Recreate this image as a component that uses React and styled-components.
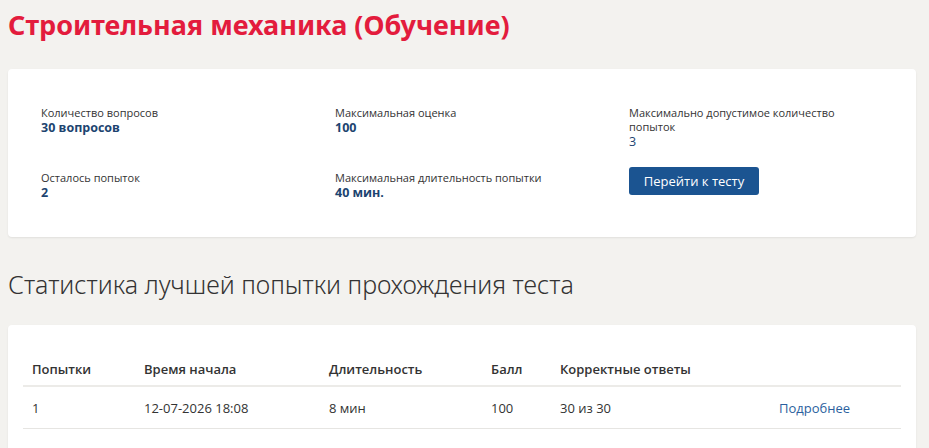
import React from "react";
import styled, { createGlobalStyle } from "styled-components";

const Global = createGlobalStyle`
  html, body {
    margin: 0;
    padding: 0;
    background: #f3f2ef;
    font-family: "Open Sans", "Noto Sans", sans-serif;
    color: #333;
  }
`;

const Page = styled.div`
  padding: 6px 13px 0 8px;
`;

const Title = styled.h1`
  margin: 0;
  font-family: "Noto Sans", sans-serif;
  font-size: 27px;
  font-weight: 700;
  line-height: 38px;
  color: #e31c3d;
`;

const Card = styled.div`
  background: #fff;
  border-radius: 4px;
  box-shadow: 0 1px 2px rgba(0, 0, 0, 0.08);
  padding: ${(p) => p.$pad};
  margin-top: ${(p) => p.$top}px;
`;

const InfoGrid = styled.div`
  display: grid;
  grid-template-columns: 294px 294px 1fr;
  row-gap: 22px;
`;

const Item = styled.div`
  display: flex;
  flex-direction: column;
  width: 220px;
`;

const Label = styled.div`
  font-size: 11px;
  line-height: 14px;
  color: #333;
`;

const Value = styled.div`
  font-size: 12.5px;
  line-height: 15px;
  font-weight: ${(p) => (p.$bold ? 700 : 400)};
  color: #1d4470;
`;

const Button = styled.button`
  width: 130px;
  height: 28px;
  margin-top: -4px;
  border: none;
  border-radius: 3px;
  background: #1b5491;
  color: #fff;
  font-family: "Open Sans", sans-serif;
  font-size: 13px;
  cursor: pointer;
`;

const SubTitle = styled.h2`
  margin: 30px 0 0;
  font-family: "Noto Sans", sans-serif;
  font-size: 25px;
  font-weight: 300;
  line-height: 34px;
  color: #333;
`;

const Table = styled.table`
  width: 100%;
  table-layout: fixed;
  border-collapse: collapse;
  font-size: 13px;
`;

const Col = styled.col`
  width: ${(p) => p.$w}px;
`;

const Th = styled.th`
  text-align: left;
  font-weight: 600;
  color: #333;
  padding: 5px 9px 0;
  height: 33px;
  border-bottom: 2px solid #ecebe8;
`;

const Td = styled.td`
  padding: 1px 9px 0;
  height: 40px;
  color: #333;
  border-bottom: 1px solid #e6e5e2;
  white-space: nowrap;
`;

const More = styled.a`
  color: #2b5f9e;
  text-decoration: none;
`;

const info = [
  { label: "Количество вопросов", value: "30 вопросов", bold: true },
  { label: "Максимальная оценка", value: "100", bold: true },
  { label: "Максимально допустимое количество попыток", value: "3" },
  { label: "Осталось попыток", value: "2", bold: true },
  { label: "Максимальная длительность попытки", value: "40 мин.", bold: true },
];

const cols = [
  ["Попытки", 112],
  ["Время начала", 185],
  ["Длительность", 162],
  ["Балл", 69],
  ["Корректные ответы", 219],
  ["", 131],
];

export default function App() {
  return (
    <Page>
      <Global />
      <Title>Строительная механика (Обучение)</Title>
      <Card $pad="37px 33px 37px" $top={25}>
        <InfoGrid>
          {info.map((it) => (
            <Item key={it.label}>
              <Label>{it.label}</Label>
              <Value $bold={it.bold}>{it.value}</Value>
            </Item>
          ))}
          <Item>
            <Button>Перейти к тесту</Button>
          </Item>
        </InfoGrid>
      </Card>
      <SubTitle>Статистика лучшей попытки прохождения теста</SubTitle>
      <Card $pad="22px 15px 30px" $top={24}>
        <Table>
          <colgroup>
            {cols.map(([c, w]) => (
              <Col key={c || "x"} $w={w} />
            ))}
          </colgroup>
          <thead>
            <tr>
              {cols.map(([c]) => (
                <Th key={c || "x"}>{c}</Th>
              ))}
            </tr>
          </thead>
          <tbody>
            <tr>
              <Td>1</Td>
              <Td>12-07-2026 18:08</Td>
              <Td>8 мин</Td>
              <Td>100</Td>
              <Td>30 из 30</Td>
              <Td>
                <More href="#">Подробнее</More>
              </Td>
            </tr>
          </tbody>
        </Table>
      </Card>
    </Page>
  );
}
